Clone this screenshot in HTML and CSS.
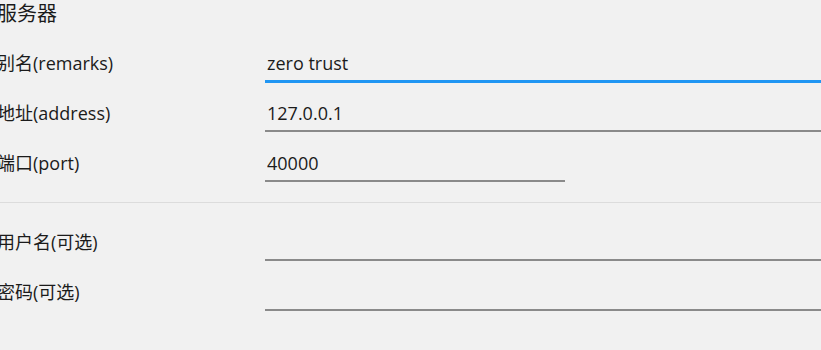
FILE: index.html
```html
<!DOCTYPE html>
<html lang="zh-CN">
<head>
<meta charset="utf-8">
<title>服务器</title>
<link rel="stylesheet" href="styles.css">
</head>
<body>
<div class="form">
  <div class="header">服务器</div>
  <div class="row">
    <label class="label" for="remarks">别名(remarks)</label>
    <input class="field focused" id="remarks" value="zero trust">
  </div>
  <div class="row">
    <label class="label" for="address">地址(address)</label>
    <input class="field" id="address" value="127.0.0.1">
  </div>
  <div class="row">
    <label class="label" for="port">端口(port)</label>
    <input class="field short" id="port" value="40000">
  </div>
  <div class="divider"></div>
  <div class="row">
    <label class="label" for="user">用户名(可选)</label>
    <input class="field" id="user" value="">
  </div>
  <div class="row">
    <label class="label" for="pass">密码(可选)</label>
    <input class="field" id="pass" type="password" value="">
  </div>
</div>
</body>
</html>
```
FILE: styles.css
```css
html, body {
  margin: 0;
  padding: 0;
  background: #f1f1f1;
  overflow: hidden;
}
body {
  width: 821px;
  height: 350px;
  font-family: "Open Sans", "Noto Sans CJK SC", sans-serif;
  font-size: 18px;
  color: #1b1b1b;
}
.form {
  margin-left: -3px;
  width: 824px;
}
.header {
  height: 32px;
  line-height: 27px;
  font-size: 20px;
}
.row {
  display: grid;
  grid-template-columns: 268px 1fr;
  align-items: baseline;
  height: 50px;
}
.label {
  white-space: nowrap;
  line-height: 24px;
}
.field {
  font: inherit;
  color: inherit;
  background: transparent;
  border: none;
  border-bottom: 2px solid #8a8a8a;
  outline: none;
  margin: 16px 0 0 0;
  padding: 0 2px 3px 2px;
  height: 34px;
  box-sizing: border-box;
  width: 100%;
}
.field.short {
  width: 300px;
}
.field.focused {
  border-bottom: 3px solid #2196f3;
  height: 35px;
  margin-bottom: -1px;
}
.divider {
  height: 1px;
  background: #dcdcdc;
  margin: 20px 0 8px 0;
}
```
